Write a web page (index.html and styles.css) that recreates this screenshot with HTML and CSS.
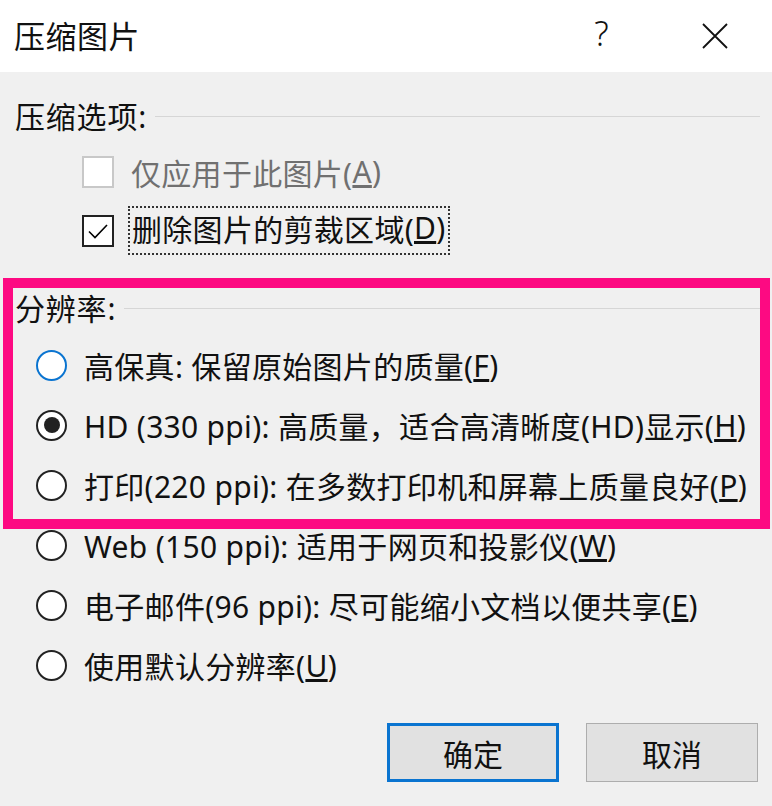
FILE: index.html
```html
<!DOCTYPE html>
<html lang="zh-CN">
<head>
	<meta charset="UTF-8">
	<title>压缩图片</title>
	<link rel="stylesheet" href="styles.css">
</head>
<body>
	<div class="dialog">
		<div class="titlebar">
			<span class="title">压缩图片</span>
			<span class="help">?</span>
			<span class="close">
				<svg width="26" height="26" viewBox="0 0 26 26"><path d="M1 1L25 25M25 1L1 25" stroke="#111" stroke-width="1.8" fill="none"/></svg>
			</span>
		</div>
		<div class="body">
			<div class="group">
				<span class="group-name">压缩选项:</span>
				<span class="group-line"></span>
			</div>
			<ul class="checks">
				<li class="disabled"><span class="box"></span><span class="label">仅应用于此图片(<u>A</u>)</span></li>
				<li><span class="box">
					<svg width="28" height="28" viewBox="0 0 28 28"><path d="M5 14.5L11 20.5L23 8" stroke="#000" stroke-width="1.6" fill="none"/></svg>
				</span><span class="label focus">删除图片的剪裁区域(<u>D</u>)</span></li>
			</ul>
			<div class="group group-res">
				<span class="group-name">分辨率:</span>
				<span class="group-line"></span>
			</div>
			<ul class="radios">
				<li><span class="radio hover"></span>高保真: 保留原始图片的质量(<u>F</u>)</li>
				<li><span class="radio checked"></span>HD (330 ppi): 高质量，适合高清晰度(HD)显示(<u>H</u>)</li>
				<li><span class="radio"></span>打印(220 ppi): 在多数打印机和屏幕上质量良好(<u>P</u>)</li>
				<li><span class="radio"></span>Web (150 ppi): 适用于网页和投影仪(<u>W</u>)</li>
				<li><span class="radio"></span>电子邮件(96 ppi): 尽可能缩小文档以便共享(<u>E</u>)</li>
				<li><span class="radio"></span>使用默认分辨率(<u>U</u>)</li>
			</ul>
			<div class="buttons">
				<button class="btn default">确定</button>
				<button class="btn">取消</button>
			</div>
		</div>
		<div class="mark"></div>
	</div>
</body>
</html>
```

FILE: styles.css
```css
*{
	margin: 0;
	padding: 0;
	box-sizing: border-box;
}
body{
	background: #f0f0f0;
	font-family: "Noto Sans", "Noto Sans CJK SC", sans-serif;
	font-size: 30px;
	letter-spacing: 0.3px;
	color: #111;
}
.dialog{
	width: 772px;
	height: 806px;
	position: relative;
	overflow: hidden;
}
.titlebar{
	height: 72px;
	background: #fff;
	display: flex;
	align-items: center;
	padding-left: 14px;
	padding-bottom: 4px;
}
.title{
	flex: 1;
	font-size: 31px;
	letter-spacing: 0.5px;
}
.help{
	font-size: 34px;
	font-weight: 300;
	margin-right: 93px;
	margin-top: -2px;
}
.close{
	display: flex;
	margin-right: 44px;
	margin-top: 4px;
}
.body{
	padding: 0 12px 0 15px;
}
.group{
	height: 40px;
	margin-top: 23px;
	display: flex;
	align-items: center;
}
.group-name{
	letter-spacing: 0.8px;
}
.group-line{
	flex: 1;
	height: 1px;
	background: #d6d6d6;
	margin-left: 8px;
	margin-top: 2px;
}
.group-res{
	margin-top: 27px;
}
.checks{
	list-style: none;
	margin-top: 7px;
	padding-left: 67px;
}
.checks li{
	height: 59px;
	display: flex;
	align-items: center;
}
.checks .box{
	width: 32px;
	height: 32px;
	border: 2px solid #222;
	background: #fff;
	display: flex;
	align-items: center;
	justify-content: center;
	margin-right: 12px;
}
.checks .disabled{
	color: #707070;
}
.checks .disabled .box{
	border-color: #c8c8c8;
}
.label{
	padding: 0 4px;
	height: 49px;
	display: flex;
	align-items: center;
	border: 1px solid transparent;
}
.label.focus{
	border: 2px dotted #333;
	margin-left: 2px;
	padding: 0 2px 6px;
}
.radios{
	list-style: none;
	margin-top: 8px;
	padding-left: 21px;
}
.radios li{
	height: 60px;
	display: flex;
	align-items: center;
	white-space: nowrap;
}
.radio{
	width: 31px;
	height: 31px;
	border: 2px solid #222;
	border-radius: 50%;
	background: #fff;
	margin-right: 17px;
	position: relative;
	flex: none;
}
.radio.hover{
	border-color: #0a74d0;
}
.radio.checked::after{
	content: "";
	position: absolute;
	left: 5.5px;
	top: 5.5px;
	width: 16px;
	height: 16px;
	border-radius: 50%;
	background: #222;
}
.buttons{
	display: flex;
	justify-content: flex-end;
	gap: 27px;
	margin-top: 28px;
	padding-right: 2px;
}
.btn{
	width: 172px;
	height: 59px;
	font: inherit;
	background: #e1e1e1;
	border: 1px solid #adadad;
	color: #111;
}
.btn.default{
	border: 3px solid #0a74d0;
}
.mark{
	position: absolute;
	left: 3px;
	top: 278px;
	width: 767px;
	height: 251px;
	border: 10px solid #fd0a82;
}
```
